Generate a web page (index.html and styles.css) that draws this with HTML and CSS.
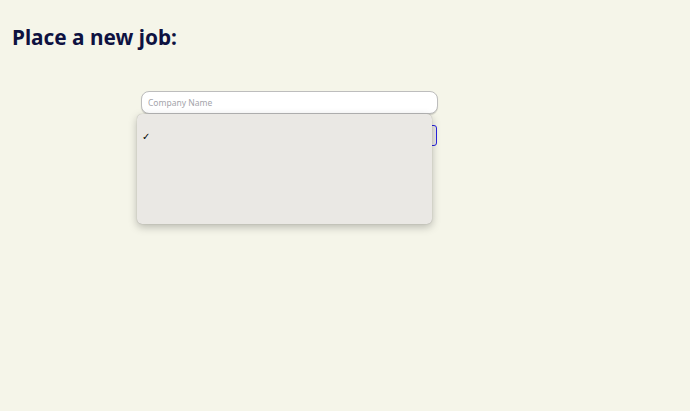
FILE: index.html
```html
<!DOCTYPE html>
<html>
<head>
<meta charset="utf-8">
<link rel="stylesheet" href="styles.css">
</head>
<body>
<h1 class="title">Place a new job:</h1>
<form class="job-form">
  <input class="field" type="text" placeholder="Company Name">
  <div class="select-wrap">
    <div class="select-box"><span class="caret">⌄</span></div>
    <div class="dropdown">
      <div class="option"><span class="check">✓</span></div>
    </div>
  </div>
</form>
</body>
</html>
```
FILE: styles.css
```css
html, body {
  margin: 0;
  padding: 0;
  background: #f5f5e9;
  height: 100%;
}
body {
  font-family: "Noto Sans", "Open Sans", sans-serif;
}
.title {
  margin: 0;
  padding: 22px 0 0 12px;
  font-size: 20.8px;
  font-weight: 700;
  color: #0e1241;
  line-height: 30px;
}
.job-form {
  display: flex;
  flex-direction: column;
  width: 297px;
  margin: 39px 0 0 141px;
  gap: 11px;
}
.field {
  box-sizing: border-box;
  width: 297px;
  height: 23px;
  border: 1px solid #bdbdbd;
  border-radius: 8px;
  background: #fff;
  padding: 0 6px;
  font-family: "Noto Sans", sans-serif;
  font-size: 8.5px;
  outline: none;
  box-shadow: 0 1px 1px rgba(0,0,0,0.15);
}
.field::placeholder {
  color: #a4a4aa;
}
.select-wrap {
  position: relative;
  height: 21px;
}
.select-box {
  box-sizing: border-box;
  height: 21px;
  width: 296px;
  border: 1px solid #2a24e0;
  border-radius: 3px;
  background: #ebe9e4;
  display: flex;
  justify-content: flex-end;
  align-items: center;
  padding-right: 3px;
}
.caret {
  font-size: 7px;
  color: #777;
  line-height: 1;
}
.dropdown {
  position: absolute;
  left: -4px;
  top: -11px;
  width: 295px;
  height: 110px;
  background: #eae8e4;
  border-radius: 5px;
  box-shadow: 0 3px 8px rgba(0,0,0,0.25), 0 0 1px rgba(0,0,0,0.3);
}
.option {
  height: 22px;
  margin-top: 12px;
  display: flex;
  align-items: center;
  padding-left: 5px;
}
.check {
  font-size: 10px;
  color: #000;
  font-weight: 700;
  font-family: "DejaVu Sans", sans-serif;
  line-height: 1;
}
```
